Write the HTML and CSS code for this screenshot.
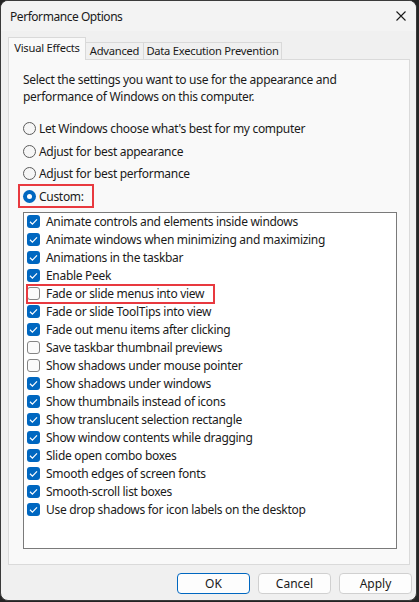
FILE: index.html
```html
<!DOCTYPE html>
<html>
<head>
<meta charset="utf-8">
<link rel="stylesheet" href="styles.css">
</head>
<body>
<div class="window">
  <div class="titlebar">
    <span class="title">Performance Options</span>
    <svg class="close" width="10" height="10" viewBox="0 0 10 10"><path d="M0.5 0.5 L9.5 9.5 M9.5 0.5 L0.5 9.5" stroke="#1a1a1a" stroke-width="1.1" fill="none"/></svg>
  </div>
  <div class="content">
    <div class="tabs">
      <div class="tab active tab-visual">Visual Effects</div>
      <div class="tab tab-adv">Advanced</div>
      <div class="tab tab-dep">Data Execution Prevention</div>
    </div>
    <div class="panel">
      <p class="desc">Select the settings you want to use for the appearance and<br>performance of Windows on this computer.</p>
      <div class="radios">
        <div class="radio-row"><span class="radio"></span>Let Windows choose what's best for my computer</div>
        <div class="radio-row"><span class="radio"></span>Adjust for best appearance</div>
        <div class="radio-row"><span class="radio"></span>Adjust for best performance</div>
        <div class="radio-row"><span class="custom-box"><span class="radio on"></span>Custom:</span></div>
      </div>
      <div class="list">
        <div class="item"><span class="cb on"><svg viewBox="0 0 13 13"><path d="M3 6.8 L5.4 9.1 L10 4.3"/></svg></span>Animate controls and elements inside windows</div>
        <div class="item"><span class="cb on"><svg viewBox="0 0 13 13"><path d="M3 6.8 L5.4 9.1 L10 4.3"/></svg></span>Animate windows when minimizing and maximizing</div>
        <div class="item"><span class="cb on"><svg viewBox="0 0 13 13"><path d="M3 6.8 L5.4 9.1 L10 4.3"/></svg></span>Animations in the taskbar</div>
        <div class="item"><span class="cb on"><svg viewBox="0 0 13 13"><path d="M3 6.8 L5.4 9.1 L10 4.3"/></svg></span>Enable Peek</div>
        <div class="item highlight"><span class="cb"></span>Fade or slide menus into view</div>
        <div class="item"><span class="cb on"><svg viewBox="0 0 13 13"><path d="M3 6.8 L5.4 9.1 L10 4.3"/></svg></span>Fade or slide ToolTips into view</div>
        <div class="item"><span class="cb on"><svg viewBox="0 0 13 13"><path d="M3 6.8 L5.4 9.1 L10 4.3"/></svg></span>Fade out menu items after clicking</div>
        <div class="item"><span class="cb"></span>Save taskbar thumbnail previews</div>
        <div class="item"><span class="cb"></span>Show shadows under mouse pointer</div>
        <div class="item"><span class="cb on"><svg viewBox="0 0 13 13"><path d="M3 6.8 L5.4 9.1 L10 4.3"/></svg></span>Show shadows under windows</div>
        <div class="item"><span class="cb on"><svg viewBox="0 0 13 13"><path d="M3 6.8 L5.4 9.1 L10 4.3"/></svg></span>Show thumbnails instead of icons</div>
        <div class="item"><span class="cb on"><svg viewBox="0 0 13 13"><path d="M3 6.8 L5.4 9.1 L10 4.3"/></svg></span>Show translucent selection rectangle</div>
        <div class="item"><span class="cb on"><svg viewBox="0 0 13 13"><path d="M3 6.8 L5.4 9.1 L10 4.3"/></svg></span>Show window contents while dragging</div>
        <div class="item"><span class="cb on"><svg viewBox="0 0 13 13"><path d="M3 6.8 L5.4 9.1 L10 4.3"/></svg></span>Slide open combo boxes</div>
        <div class="item"><span class="cb on"><svg viewBox="0 0 13 13"><path d="M3 6.8 L5.4 9.1 L10 4.3"/></svg></span>Smooth edges of screen fonts</div>
        <div class="item"><span class="cb on"><svg viewBox="0 0 13 13"><path d="M3 6.8 L5.4 9.1 L10 4.3"/></svg></span>Smooth-scroll list boxes</div>
        <div class="item"><span class="cb on"><svg viewBox="0 0 13 13"><path d="M3 6.8 L5.4 9.1 L10 4.3"/></svg></span>Use drop shadows for icon labels on the desktop</div>
      </div>
    </div>
    <div class="buttons">
      <button class="btn default">OK</button>
      <button class="btn">Cancel</button>
      <button class="btn">Apply</button>
    </div>
  </div>
</div>
</body>
</html>
```

FILE: styles.css
```css
* { box-sizing: border-box; }
html, body { margin: 0; padding: 0; }
body {
  background: #242424;
  width: 419px;
  height: 602px;
  overflow: hidden;
  font-family: "Noto Sans", "DejaVu Sans", sans-serif;
  font-size: 12px;
  color: #1a1a1a;
}
.window {
  width: 417px;
  height: 601px;
  border: 1px solid #3a3a3a;
  border-radius: 8px;
  background: #f0f0f0;
  overflow: hidden;
}
.titlebar {
  height: 30px;
  background: #f3f3f3;
  display: flex;
  align-items: center;
  justify-content: space-between;
  padding: 0 10px 0 9px;
}
.title { font-size: 12px; color: #1a1a1a; letter-spacing: -0.45px; }
.close { display: block; }
.content { padding: 0 4px 0 7px; }
.tabs {
  display: flex;
  align-items: flex-end;
  height: 28px;
  position: relative;
  z-index: 1;
}
.tab {
  height: 17px;
  line-height: 16px;
  text-align: center;
  white-space: nowrap;
  font-size: 11.2px;
  letter-spacing: -0.25px;
  border: 1px solid #d9d9d9;
  border-bottom: none;
  border-left: none;
  background: #f0f0f0;
}
.tab-visual { width: 78px; }
.tab-adv { width: 58px; }
.tab-dep { width: 138px; }
.tab.active {
  height: 23px;
  line-height: 19px;
  border-left: 1px solid #d9d9d9;
  background: #f9f9f9;
  margin-bottom: -1px;
}
.panel {
  width: 402px;
  height: 506px;
  border: 1px solid #dadada;
  background: #f9f9f9;
  padding: 11px 12px 0 14px;
  letter-spacing: -0.3px;
}
.desc {
  margin: 0;
  line-height: 17px;
}
.radios { margin-top: 12px; }
.radio-row {
  display: flex;
  align-items: center;
  height: 22.7px;
}
.radio {
  width: 13px;
  height: 13px;
  border: 1px solid #5c5c5c;
  border-radius: 50%;
  background: #f6f6f6;
  margin-right: 3px;
  flex: none;
}
.radio.on {
  border: none;
  background: #0067c0;
  display: flex;
  align-items: center;
  justify-content: center;
}
.radio.on::after {
  content: "";
  width: 5px;
  height: 5px;
  border-radius: 50%;
  background: #fff;
}
.custom-box {
  display: flex;
  align-items: center;
  height: 24px;
  border: 2px solid #e8393f;
  margin-left: -5px;
  padding: 0 8px 0 3px;
}
.list {
  margin-top: 4px;
  width: 374px;
  height: 337px;
  border: 1px solid #7a7a7a;
  background: #fff;
  padding-left: 3px;
}
.item {
  display: flex;
  align-items: center;
  height: 18px;
}
.cb {
  width: 13px;
  height: 13px;
  border: 1px solid #858585;
  border-radius: 3px;
  background: #fbfbfb;
  margin-right: 6px;
  flex: none;
}
.cb.on {
  border: none;
  background: #0067c0;
}
.cb svg { display: block; width: 13px; height: 13px; }
.cb svg path { fill: none; stroke: #fff; stroke-width: 1.2; }
.item.highlight {
  width: fit-content;
  padding-right: 10px;
  outline: 2px solid #e8393f;
  outline-offset: -1px;
}
.buttons {
  display: flex;
  justify-content: flex-end;
  gap: 8px;
  margin-top: 8px;
}
.btn {
  width: 73px;
  height: 21px;
  border: 1px solid #d0d0d0;
  border-radius: 4px;
  background: #fdfdfd;
  font-family: inherit;
  font-size: 12px;
  color: #1a1a1a;
  padding: 0;
}
.btn.default { border-color: #0067c0; }
```
